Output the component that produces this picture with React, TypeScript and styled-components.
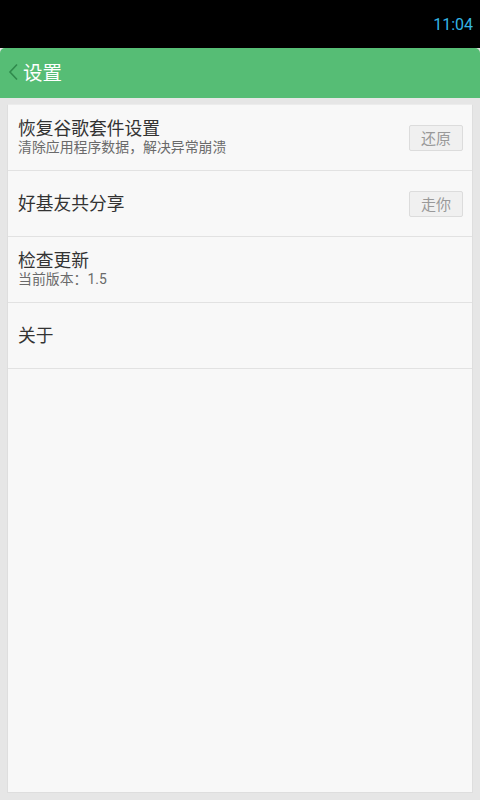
import React from "react";
import styled, { createGlobalStyle } from "styled-components";

const Global = createGlobalStyle`
  html, body { margin: 0; padding: 0; height: 100%; }
  body { background: #e6e6e6; font-family: Roboto, "Noto Sans CJK SC", sans-serif; }
  #root { height: 100%; }
`;

const Screen = styled.div`
  width: 480px;
  height: 800px;
  display: flex;
  flex-direction: column;
  background: #e6e6e6;
  overflow: hidden;
`;

const StatusBar = styled.div`
  height: 48px;
  background: #000;
  display: flex;
  align-items: center;
  justify-content: flex-end;
  padding-right: 7px;
  flex-shrink: 0;
`;

const Clock = styled.span`
  color: #33b5e5;
  font-family: Roboto, sans-serif;
  font-size: 16px;
`;

const Header = styled.div`
  height: 50px;
  background: #56bd75;
  border-radius: 5px 5px 0 0;
  display: flex;
  align-items: center;
  padding-left: 8px;
  flex-shrink: 0;
`;

const BackIcon = styled.svg`
  width: 11px;
  height: 18px;
  margin-right: 4px;
  margin-top: -2px;
`;

const HeaderTitle = styled.span`
  color: #fff;
  font-size: 19.5px;
  font-family: "Noto Sans CJK SC", sans-serif;
  font-weight: 400;
  margin-top: -3px;
`;

const Body = styled.div`
  flex: 1;
  padding: 6px 7px 7px 7px;
  display: flex;
`;

const Card = styled.div`
  flex: 1;
  background: #f8f8f8;
  border: 1px solid #dedede;
  border-top-color: #ececec;
  display: flex;
  flex-direction: column;
`;

const Row = styled.div`
  height: 65px;
  border-bottom: 1px solid #e2e2e2;
  display: flex;
  align-items: center;
  padding: 0 9px 0 10px;
`;

const Texts = styled.div`
  flex: 1;
  display: flex;
  flex-direction: column;
  justify-content: center;
  margin-top: -3px;
`;

const Title = styled.div`
  font-family: "Noto Sans CJK SC", sans-serif;
  font-size: 17.75px;
  color: #333;
  line-height: 22px;
`;

const Sub = styled.div`
  font-family: Roboto, "Noto Sans CJK SC", sans-serif;
  font-size: 13.9px;
  color: #6a6a6a;
  line-height: 18px;
`;

const Btn = styled.div`
  width: 52px;
  height: 24px;
  border: 1px solid #dcdcdc;
  border-radius: 2px;
  background: #f0f0f0;
  color: #999;
  font-family: "Noto Sans CJK SC", sans-serif;
  font-size: 15px;
  display: flex;
  align-items: center;
  justify-content: center;
`;

const items = [
  { title: "恢复谷歌套件设置", sub: "清除应用程序数据，解决异常崩溃", btn: "还原" },
  { title: "好基友共分享", btn: "走你" },
  { title: "检查更新", sub: "当前版本：1.5" },
  { title: "关于" },
];

export default function App() {
  return (
    <Screen>
      <Global />
      <StatusBar>
        <Clock>11:04</Clock>
      </StatusBar>
      <Header>
        <BackIcon viewBox="0 0 11 18">
          <path d="M9 1.5 L2 9 L9 16.5" fill="none" stroke="#2f8a4c" strokeWidth="1.6" />
        </BackIcon>
        <HeaderTitle>设置</HeaderTitle>
      </Header>
      <Body>
        <Card>
          {items.map((it) => (
            <Row key={it.title}>
              <Texts>
                <Title>{it.title}</Title>
                {it.sub && <Sub>{it.sub}</Sub>}
              </Texts>
              {it.btn && <Btn>{it.btn}</Btn>}
            </Row>
          ))}
        </Card>
      </Body>
    </Screen>
  );
}
